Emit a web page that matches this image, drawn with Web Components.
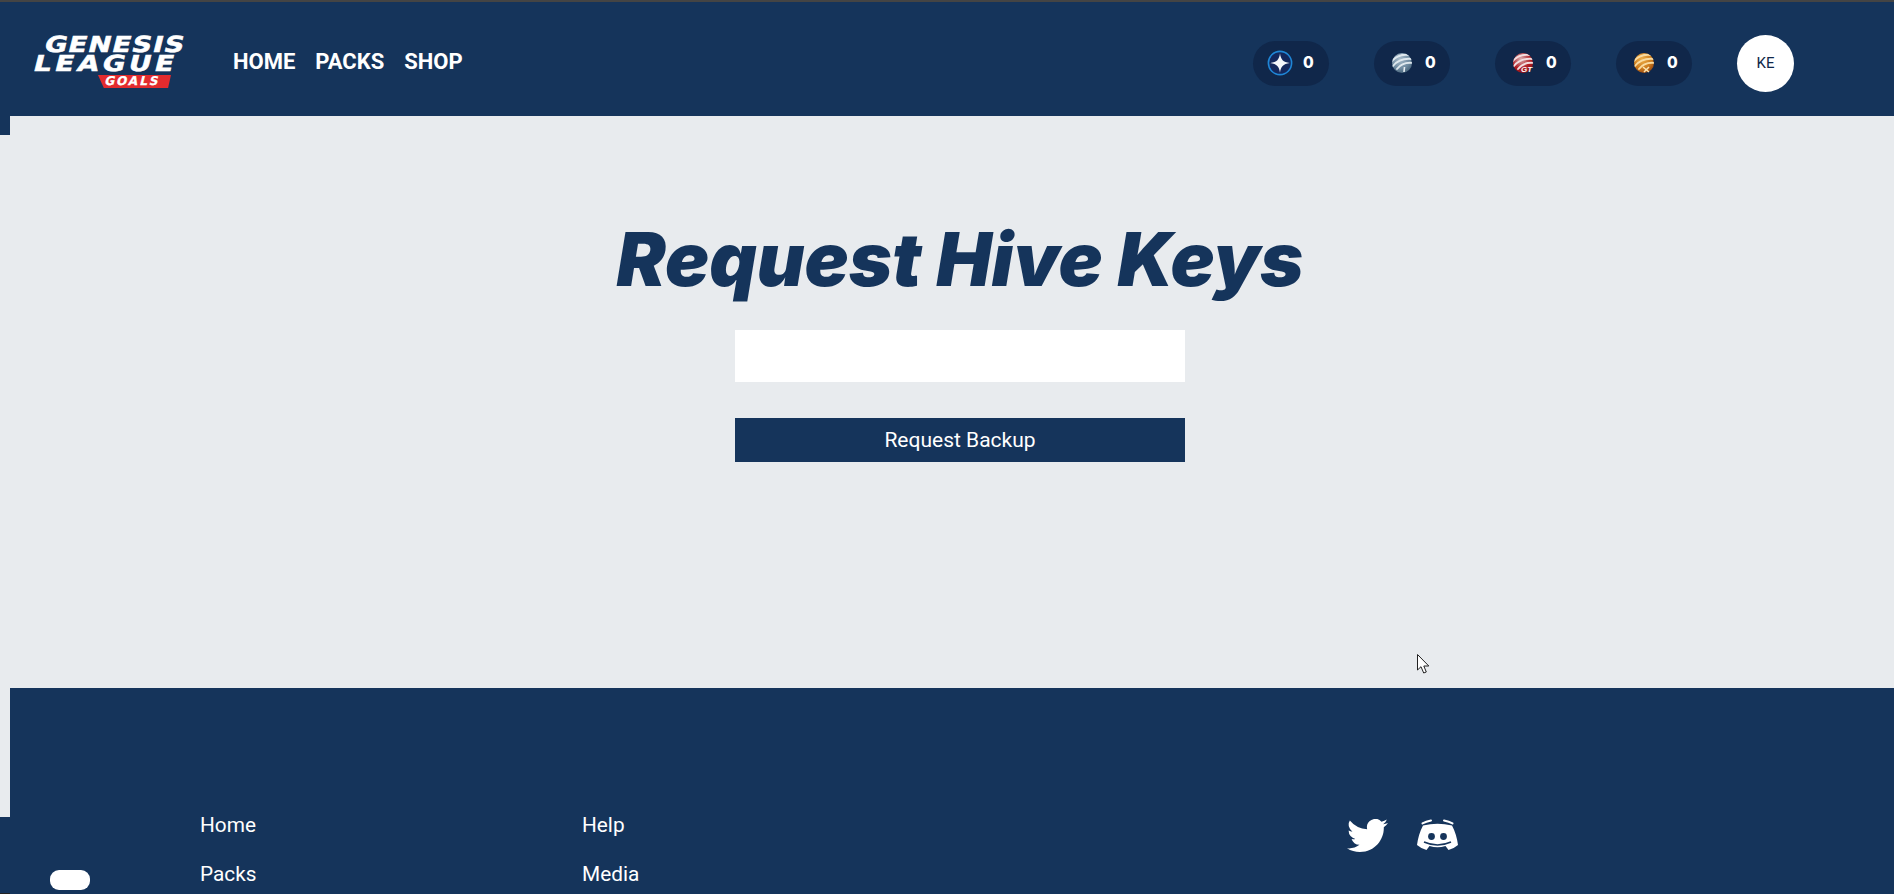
<!DOCTYPE html>
<html lang="en">
<head>
<meta charset="utf-8">
<title>Request Hive Keys</title>
<style>
  html, body { margin: 0; height: 894px; overflow: hidden; }
  body {
    position: relative;
    box-sizing: border-box;
    border-top: 2px solid #444;
    background: #e8ebee;
    font-family: Roboto, "Liberation Sans", sans-serif;
  }
</style>
</head>
<body>
  <gl-header>
    <gl-nav-link slot="nav">HOME</gl-nav-link>
    <gl-nav-link slot="nav">PACKS</gl-nav-link>
    <gl-nav-link slot="nav">SHOP</gl-nav-link>
    <gl-balance slot="balances" kind="star" amount="0"></gl-balance>
    <gl-balance slot="balances" kind="silver" amount="0"></gl-balance>
    <gl-balance slot="balances" kind="red" amount="0"></gl-balance>
    <gl-balance slot="balances" kind="gold" amount="0"></gl-balance>
    <gl-avatar slot="avatar">KE</gl-avatar>
  </gl-header>
  <gl-shell>
    <gl-backup-form></gl-backup-form>
    <gl-footer>
      <gl-footer-link slot="col1">Home</gl-footer-link>
      <gl-footer-link slot="col1">Packs</gl-footer-link>
      <gl-footer-link slot="col2">Help</gl-footer-link>
      <gl-footer-link slot="col2">Media</gl-footer-link>
    </gl-footer>
  </gl-shell>
  <gl-float-pill></gl-float-pill>
  <gl-cursor></gl-cursor>

<script>
const NAVY = "#15345b";

const headerTemplate = document.createElement("template");
headerTemplate.innerHTML = `
  <style>
    :host {
      display: flex;
      align-items: center;
      box-sizing: border-box;
      height: 114px;
      padding: 8px 100px 0 34px;
      background: ${NAVY};
    }
    .logo {
      flex: none;
      width: 150px;
      height: 53px;
      margin-bottom: 3px;
      font: 700 22px/19px "DejaVu Sans", sans-serif;
      color: #fff;
      white-space: nowrap;
      -webkit-text-stroke: .6px #fff;
    }
    .logo div { transform-origin: 0 50%; }
    .genesis { margin-left: 11px; letter-spacing: 1px; transform: skewX(-14deg) scaleX(1.24); }
    .league { margin-left: 0; letter-spacing: 3px; transform: skewX(-14deg) scaleX(1.25); }
    .logo .badge {
      box-sizing: border-box;
      width: 73px;
      height: 13px;
      margin: 2px 0 0 64px;
      padding-left: 7px;
      background: #e32b2e;
      clip-path: polygon(0 0, 100% 0, 96% 100%, 8% 100%);
      font-size: 12px;
      line-height: 13px;
      letter-spacing: 2px;
      -webkit-text-stroke: .3px #fff;
    }
    .badge span { display: inline-block; transform: skewX(-14deg); }
    .nav { display: flex; gap: 20px; margin: 0 0 3px 49px; }
    .balances { display: flex; gap: 45px; margin-left: auto; }
    .avatar { margin-left: 45px; }
  </style>
  <div class="logo">
    <div class="genesis">GENESIS</div>
    <div class="league">LEAGUE</div>
    <div class="badge"><span>GOALS</span></div>
  </div>
  <div class="nav"><slot name="nav"></slot></div>
  <div class="balances"><slot name="balances"></slot></div>
  <div class="avatar"><slot name="avatar"></slot></div>
`;

class GlHeader extends HTMLElement {
  constructor() {
    super();
    this.attachShadow({ mode: "open" });
    this.shadowRoot.appendChild(headerTemplate.content.cloneNode(true));
  }
}

const navLinkTemplate = document.createElement("template");
navLinkTemplate.innerHTML = `
  <style>
    :host {
      display: block;
      font: 700 22px/24px Roboto, "Liberation Sans", sans-serif;
      color: #fff;
      cursor: pointer;
    }
  </style>
  <slot></slot>
`;

class GlNavLink extends HTMLElement {
  constructor() {
    super();
    this.attachShadow({ mode: "open" });
    this.shadowRoot.appendChild(navLinkTemplate.content.cloneNode(true));
  }
}

// stripes shared by the three round coins
const stripes = (color) => `
  <g clip-path="url(#c)" fill="none" stroke="${color}" stroke-width="1.9" stroke-linecap="round">
    <path d="M1 11 C5 6 11 3 19 4"/>
    <path d="M3 15 C7 10 13 7 22 8"/>
    <path d="M7 18 C10 14 15 11 23 12"/>
  </g>`;

const coin = (hi, mid, low, stripe, extra) => `
  <svg width="24" height="24" viewBox="0 0 24 24">
    <defs>
      <radialGradient id="g" cx=".4" cy=".3" r=".8">
        <stop offset="0" stop-color="${hi}"/>
        <stop offset=".6" stop-color="${mid}"/>
        <stop offset="1" stop-color="${low}"/>
      </radialGradient>
      <clipPath id="c"><circle cx="12" cy="12" r="10"/></clipPath>
    </defs>
    <circle cx="12" cy="12" r="10" fill="url(#g)"/>
    ${stripes(stripe)}
    ${extra}
  </svg>`;

const COINS = {
  star: `
    <svg width="26" height="26" viewBox="0 0 26 26">
      <circle cx="13" cy="13" r="11.6" fill="#13275c" stroke="#1f86d6" stroke-width="1.6"/>
      <path d="M13 3.2 C13.8 9.5 16 12 22.8 13 C16 14 13.8 16.5 13 22.8 C12.2 16.5 10 14 3.2 13 C10 12 12.2 9.5 13 3.2Z" fill="#f4f6fa"/>
    </svg>`,
  silver: coin("#a8bccb", "#6f8ba1", "#3d5a70", "#dfe8ee",
    `<path d="M14.5 16 L14 21" stroke="#e8eff4" stroke-width="1.6"/>`),
  red: coin("#d9b0b2", "#b01c22", "#851317", "#f3dfe0",
    `<text x="10" y="21" font-family="Liberation Sans, sans-serif" font-size="8" font-style="italic" font-weight="700" fill="#fff">GT</text>`),
  gold: coin("#eeb04a", "#cc7a1c", "#8a3a0c", "#f9dba0",
    `<path d="M11 16 L17 21 M17 16 L12 21" stroke="#fbe3ae" stroke-width="1.6"/>`),
};

const balanceTemplate = document.createElement("template");
balanceTemplate.innerHTML = `
  <style>
    :host {
      display: flex;
      align-items: center;
      box-sizing: border-box;
      width: 76px;
      height: 45px;
      padding-left: 16px;
      gap: 11px;
      border-radius: 23px;
      background: #10274a;
      font: 800 15.5px/1 Inter, "Liberation Sans", sans-serif;
      color: #fff;
    }
    :host([kind="star"]) { padding-left: 14px; gap: 10px; }
    .icon { display: flex; }
  </style>
  <div class="icon"></div>
  <span class="amount"></span>
`;

class GlBalance extends HTMLElement {
  constructor() {
    super();
    this.attachShadow({ mode: "open" });
    this.shadowRoot.appendChild(balanceTemplate.content.cloneNode(true));
    this.shadowRoot.querySelector(".icon").innerHTML = COINS[this.getAttribute("kind")];
    this.shadowRoot.querySelector(".amount").innerText = this.getAttribute("amount");
  }
}

const avatarTemplate = document.createElement("template");
avatarTemplate.innerHTML = `
  <style>
    :host {
      display: flex;
      align-items: center;
      justify-content: center;
      width: 57px;
      height: 57px;
      border-radius: 50%;
      background: #fff;
      color: #10274a;
      font: 400 15px/1 Roboto, "Liberation Sans", sans-serif;
    }
  </style>
  <slot></slot>
`;

class GlAvatar extends HTMLElement {
  constructor() {
    super();
    this.attachShadow({ mode: "open" });
    this.shadowRoot.appendChild(avatarTemplate.content.cloneNode(true));
  }
}

const shellTemplate = document.createElement("template");
shellTemplate.innerHTML = `
  <style>
    :host {
      display: grid;
      grid-template-columns: 10px 1fr;
      height: 778px;
      overflow: hidden;
    }
    .strip { display: flex; flex-direction: column; }
    .top { height: 19px; background: ${NAVY}; }
    .gap { height: 682px; background: #e8ebee; }
    .low { height: 76px; background: ${NAVY}; }
    .edge { height: 1px; background: #222; }
    .content { display: flex; flex-direction: column; min-width: 0; }
  </style>
  <div class="strip">
    <div class="top"></div>
    <div class="gap"></div>
    <div class="low"></div>
    <div class="edge"></div>
  </div>
  <div class="content"><slot></slot></div>
`;

class GlShell extends HTMLElement {
  constructor() {
    super();
    this.attachShadow({ mode: "open" });
    this.shadowRoot.appendChild(shellTemplate.content.cloneNode(true));
  }
}

const formTemplate = document.createElement("template");
formTemplate.innerHTML = `
  <style>
    :host {
      display: flex;
      flex-direction: column;
      align-items: center;
      box-sizing: border-box;
      flex: none;
      height: 572px;
      padding: 99px 0 0 16px;
      background: #e8ebee;
    }
    h1 {
      margin: 0 0 25px;
      font: italic 900 73.6px/90px Inter, "Liberation Sans", sans-serif;
      color: ${NAVY};
      white-space: nowrap;
    }
    input {
      display: block;
      box-sizing: border-box;
      width: 450px;
      height: 52px;
      margin: 0 0 36px;
      border: 0;
      padding: 0 12px;
      background: #fff;
    }
    button {
      display: block;
      width: 450px;
      height: 44px;
      border: 0;
      padding: 0;
      background: ${NAVY};
      color: #fff;
      font: 400 21px/1 Roboto, "Liberation Sans", sans-serif;
      cursor: pointer;
    }
  </style>
  <h1>Request Hive Keys</h1>
  <input type="text" aria-label="Hive username">
  <button type="button">Request Backup</button>
`;

class GlBackupForm extends HTMLElement {
  constructor() {
    super();
    this.attachShadow({ mode: "open" });
    this.shadowRoot.appendChild(formTemplate.content.cloneNode(true));
  }
}

const footerTemplate = document.createElement("template");
footerTemplate.innerHTML = `
  <style>
    :host {
      display: grid;
      grid-template-columns: 382px 764px auto;
      box-sizing: border-box;
      flex: none;
      height: 300px;
      padding: 125px 0 0 190px;
      background: ${NAVY};
      color: #fff;
    }
    .col { display: flex; flex-direction: column; gap: 25px; }
    .social { display: flex; gap: 29px; margin: 6px 0 0 1px; height: 34px; align-items: flex-start; }
    svg { display: block; fill: #fff; }
  </style>
  <div class="col"><slot name="col1"></slot></div>
  <div class="col"><slot name="col2"></slot></div>
  <div class="social">
    <svg width="41" height="33" viewBox="0 0 16 13" preserveAspectRatio="none">
      <path transform="translate(0 -2)" d="M5.026 15c6.038 0 9.341-5.003 9.341-9.334 0-.14 0-.282-.006-.422A6.685 6.685 0 0 0 16 3.542a6.658 6.658 0 0 1-1.889.518 3.301 3.301 0 0 0 1.447-1.817 6.533 6.533 0 0 1-2.087.793A3.286 3.286 0 0 0 7.875 6.03a9.325 9.325 0 0 1-6.767-3.429 3.289 3.289 0 0 0 1.018 4.382A3.323 3.323 0 0 1 .64 6.575v.045a3.288 3.288 0 0 0 2.632 3.218 3.203 3.203 0 0 1-.865.115 3.23 3.23 0 0 1-.614-.057 3.283 3.283 0 0 0 3.067 2.277A6.588 6.588 0 0 1 .78 13.58a6.32 6.32 0 0 1-.78-.045A9.344 9.344 0 0 0 5.026 15z"/>
    </svg>
    <svg width="41" height="32" viewBox="0 0 41 32">
      <path d="M6 6.5 Q20.5 3 35 6.5 Q39.5 15 41 26 Q37 29.5 31.5 31 L28.5 27 Q20.5 29.5 12.5 27 L9.5 31 Q4 29.5 0 26 Q1.5 15 6 6.5Z"/>
      <path d="M5.5 4.4 Q9 2.4 14 1.4 M27 1.4 Q32 2.4 35.5 4.4" fill="none" stroke="#fff" stroke-width="2" stroke-linecap="round"/>
      <path d="M7 23 Q20.5 29 34 23" fill="none" stroke="${NAVY}" stroke-width="1.6"/>
      <circle cx="14.5" cy="17.5" r="3.4" fill="${NAVY}"/>
      <circle cx="26.5" cy="17.5" r="3.4" fill="${NAVY}"/>
    </svg>
  </div>
`;

class GlFooter extends HTMLElement {
  constructor() {
    super();
    this.attachShadow({ mode: "open" });
    this.shadowRoot.appendChild(footerTemplate.content.cloneNode(true));
  }
}

const footerLinkTemplate = document.createElement("template");
footerLinkTemplate.innerHTML = `
  <style>
    :host {
      display: block;
      font: 400 20.8px/24px Roboto, "Liberation Sans", sans-serif;
      color: #fff;
      cursor: pointer;
    }
  </style>
  <slot></slot>
`;

class GlFooterLink extends HTMLElement {
  constructor() {
    super();
    this.attachShadow({ mode: "open" });
    this.shadowRoot.appendChild(footerLinkTemplate.content.cloneNode(true));
  }
}

// floats over the footer, bottom left
const pillTemplate = document.createElement("template");
pillTemplate.innerHTML = `
  <style>
    :host {
      position: absolute;
      left: 50px;
      top: 868px;
      width: 40px;
      height: 20px;
      border-radius: 9px;
      background: #fff;
    }
  </style>
`;

class GlFloatPill extends HTMLElement {
  constructor() {
    super();
    this.attachShadow({ mode: "open" });
    this.shadowRoot.appendChild(pillTemplate.content.cloneNode(true));
  }
}

const cursorTemplate = document.createElement("template");
cursorTemplate.innerHTML = `
  <style>
    :host { position: absolute; left: 1417px; top: 652px; width: 13px; height: 20px; }
    svg { display: block; }
  </style>
  <svg width="13" height="20" viewBox="0 0 13 20">
    <path d="M.5.5 V16 L4 12.7 L6.7 19 L9.3 18 L6.8 12 H11.8 Z" fill="#fff" stroke="#222" stroke-width="1"/>
  </svg>
`;

class GlCursor extends HTMLElement {
  constructor() {
    super();
    this.attachShadow({ mode: "open" });
    this.shadowRoot.appendChild(cursorTemplate.content.cloneNode(true));
  }
}

window.customElements.define("gl-header", GlHeader);
window.customElements.define("gl-nav-link", GlNavLink);
window.customElements.define("gl-balance", GlBalance);
window.customElements.define("gl-avatar", GlAvatar);
window.customElements.define("gl-shell", GlShell);
window.customElements.define("gl-backup-form", GlBackupForm);
window.customElements.define("gl-footer", GlFooter);
window.customElements.define("gl-footer-link", GlFooterLink);
window.customElements.define("gl-float-pill", GlFloatPill);
window.customElements.define("gl-cursor", GlCursor);
</script>
</body>
</html>
